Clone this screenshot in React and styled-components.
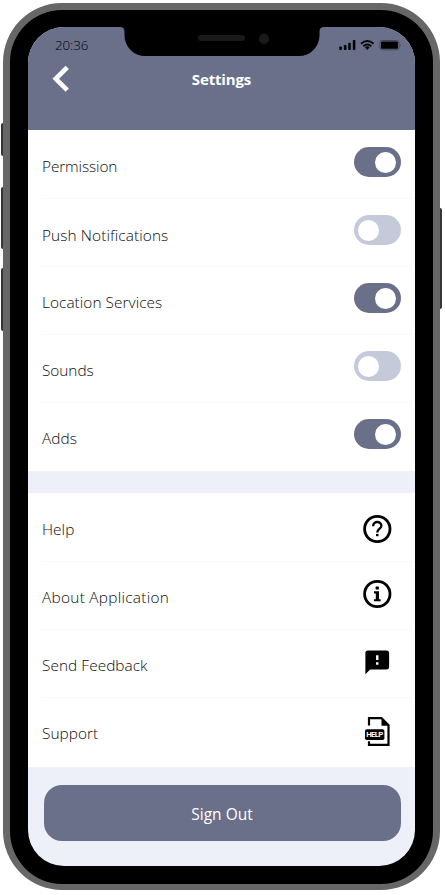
import React from "react";
import styled, { createGlobalStyle, css } from "styled-components";
import { MdFeedback } from "react-icons/md";

const slate = "#6a7089";

const GlobalStyle = createGlobalStyle`
  *, *::before, *::after { box-sizing: border-box; }
  body {
    margin: 0;
    background: #fff;
    font-family: "Open Sans", "Noto Sans", sans-serif;
    overflow: hidden;
  }
`;

const Stage = styled.main`
  width: 445px;
  height: 895px;
  padding: 3px 0 0 3px;
`;

const Device = styled.div`
  position: relative;
  width: 437px;
  height: 887px;
  padding: 17px 18px 18px;
  border: solid #676767;
  border-width: 7px 7px 6px;
  border-radius: 59px;
  background: #000;
`;

const SideButton = styled.span`
  position: absolute;
  top: ${(p) => p.$top - 10}px;
  ${(p) => (p.$right ? "right: -9px;" : "left: -9px;")}
  width: 2px;
  height: ${(p) => p.$length}px;
  background: #343737;
  border-radius: ${(p) => (p.$right ? "0 2px 2px 0" : "2px 0 0 2px")};
`;

const Screen = styled.div`
  height: 839px;
  display: flex;
  flex-direction: column;
  border-radius: 36px;
  overflow: hidden;
  background: #edf0f9;
`;

const Notch = styled.svg`
  position: absolute;
  left: 110px;
  top: 16px;
`;

const Header = styled.header`
  height: 103px;
  flex: none;
  background: ${slate};
`;

const StatusBar = styled.div`
  height: 36px;
  display: flex;
  align-items: center;
  justify-content: space-between;
  padding: 0 12px 0 27px;
`;

const Clock = styled.time`
  color: #000;
  font-size: 13.4px;
  line-height: 18px;
  font-weight: 300;
  letter-spacing: -0.1px;
`;

const NavBar = styled.div`
  display: grid;
  grid-template-columns: 25px 1fr 25px;
  padding: 0 16px;
  height: 32px;
  align-items: center;
`;

const BackButton = styled.button`
  padding: 0;
  border: 0;
  background: none;
  height: 32px;
  width: 32px;
  display: flex;
`;

const Title = styled.h1`
  margin: 0;
  color: #fff;
  text-align: center;
  font-size: 15px;
  line-height: 20px;
  font-weight: 700;
  letter-spacing: -0.15px;
`;

const Group = styled.section`
  flex: none;
  background: #fff;
  padding-top: 1px;
  padding-bottom: ${(p) => p.$extra || 0}px;
  margin-bottom: ${(p) => p.$gap || 0}px;
`;

const Row = styled.div`
  height: 68px;
  margin-left: 14px;
  padding-right: 14px;
  display: flex;
  justify-content: space-between;
  align-items: flex-start;
  border-bottom: 1px solid #f9f9f9;
  &:last-child { border-bottom-color: transparent; }
`;

const Label = styled.span`
  padding-top: ${(p) => (p.$low ? 25 : 24)}px;
  color: #0c0c0c;
  font-size: 15.4px;
  line-height: 24px;
  font-weight: 300;
  letter-spacing: ${(p) => p.$track || 0}px;
  white-space: nowrap;
`;

const Toggle = styled.button`
  width: 47px;
  height: 30px;
  margin-top: 16px;
  padding: 0 4px;
  border: 0;
  border-radius: 15px;
  display: flex;
  align-items: center;
  ${(p) =>
    p.$on
      ? css`justify-content: flex-end; background: ${slate}; padding-right: 5px;`
      : css`justify-content: flex-start; background: #c5cadb;`}
`;

const Knob = styled.span`
  width: 21px;
  height: 21px;
  border-radius: 50%;
  background: #fff;
`;

const IconSlot = styled.span`
  width: 34px;
  height: 34px;
  margin: ${(p) => p.$top}px 7px 0 0;
  display: flex;
  align-items: center;
  justify-content: center;
  color: #000;
  svg { flex: none; display: block; }
`;

const SignOut = styled.button`
  flex: none;
  height: 56px;
  margin: 18px 14.5px 0 15.5px;
  border: 0;
  border-radius: 18px;
  background: ${slate};
  color: #fff;
  font-family: inherit;
  font-size: 15.5px;
  line-height: 24px;
  padding: 3px 0 0;
`;

const StatusIcons = () => (
  <svg width="64" height="14" viewBox="0 0 64 14">
    <g fill="#050507">
      <rect x="0.3" y="8.6" width="2.6" height="3.3" rx="0.7" />
      <rect x="4.9" y="6.9" width="2.6" height="5" rx="0.7" />
      <rect x="9.2" y="4.8" width="2.6" height="7.1" rx="0.7" />
      <rect x="13.8" y="2" width="2.6" height="9.9" rx="0.7" />
      <path d="M26 9.3a3 3 0 0 1 4.6 0L28.3 12z" />
    </g>
    <g fill="none" stroke="#050507" strokeWidth="1.9">
      <path d="M22 5.7q6.3-5.2 12.6 0" />
      <path d="M24.3 8.2q4-3.2 8 0" />
    </g>
    <rect x="40.8" y="2.5" width="19.2" height="9.3" rx="2.4" fill="none" stroke="#454958" />
    <rect x="42" y="3.5" width="16.9" height="7.3" rx="1.1" fill="#000" />
    <path d="M61.3 5.5q1.5 1.6 0 3.2z" fill="#454958" />
  </svg>
);

const BackIcon = () => (
  <svg width="32" height="32" viewBox="0 0 32 32">
    <path d="M23.2 4.4 11.8 15.8 23.2 27.2" fill="none" stroke="#fff" strokeWidth="4.7" />
  </svg>
);

const QuestionIcon = () => (
  <svg width="34" height="34" viewBox="0 0 34 34">
    <circle cx="17.3" cy="17" r="12.7" fill="none" stroke="#000" strokeWidth="2.8" />
    <path
      d="M13.2 14.3v-.6a4.1 3.7 0 0 1 8.2 0c0 2.9-4.1 3.1-4.1 6.7"
      fill="none"
      stroke="#000"
      strokeWidth="2.3"
    />
    <rect x="16" y="21.9" width="2.5" height="2.3" />
  </svg>
);

const InfoIcon = () => (
  <svg width="34" height="34" viewBox="0 0 34 34">
    <circle cx="17.3" cy="17" r="12.7" fill="none" stroke="#000" strokeWidth="2.8" />
    <rect x="15.6" y="9.5" width="3.3" height="3.1" rx="0.5" />
    <path d="M14 14.2h5v8h1.6v2.1h-6.7v-2.1h1.9v-5.8h-1.8z" />
  </svg>
);

const HelpFileIcon = () => (
  <svg width="34" height="34" viewBox="0 0 34 34">
    <path d="M9 11.5V4.2h12.5l7 7v19.6h-19.5v-3.5" fill="none" stroke="#000" strokeWidth="2.2" />
    <path d="M21.5 4v7.8h7.8z" />
    <rect x="5" y="15.2" width="19.4" height="10.8" rx="1.8" />
    <text
      x="14.7"
      y="23.4"
      fill="#fff"
      fontSize="7.8"
      fontWeight="700"
      fontFamily="Roboto, sans-serif"
      textAnchor="middle"
      textLength="17"
      lengthAdjust="spacing"
    >
      HELP
    </text>
  </svg>
);

const preferences = [
  { label: "Permission", on: true, track: -0.12 },
  { label: "Push Notifications", on: false, track: 0.1, low: true },
  { label: "Location Services", on: true, track: 0.05 },
  { label: "Sounds", on: false, track: -0.05 },
  { label: "Adds", on: true, track: 0.05 },
];

const links = [
  { label: "Help", icon: <QuestionIcon />, top: 18, track: 0.05 },
  { label: "About Application", icon: <InfoIcon />, top: 15, track: 0.28 },
  { label: "Send Feedback", icon: <MdFeedback size={28.5} />, top: 15, track: 0.05 },
  { label: "Support", icon: <HelpFileIcon />, top: 16, track: 0.03 },
];

export default function App() {
  const [values, setValues] = React.useState(preferences.map((p) => p.on));
  const flip = (i) => setValues((v) => v.map((on, n) => (n === i ? !on : on)));

  return (
    <>
      <GlobalStyle />
      <Stage>
        <Device>
          <SideButton $top={123} $length={33} />
          <SideButton $top={187} $length={62} />
          <SideButton $top={268} $length={63} />
          <SideButton $top={208} $length={101} $right />
          <Screen>
            <Header>
              <StatusBar>
                <Clock>20:36</Clock>
                <StatusIcons />
              </StatusBar>
              <NavBar>
                <BackButton aria-label="Back">
                  <BackIcon />
                </BackButton>
                <Title>Settings</Title>
              </NavBar>
            </Header>
            <Group $gap={22}>
              {preferences.map((item, i) => (
                <Row key={item.label}>
                  <Label $track={item.track} $low={item.low}>{item.label}</Label>
                  <Toggle $on={values[i]} onClick={() => flip(i)} aria-label={item.label}>
                    <Knob />
                  </Toggle>
                </Row>
              ))}
            </Group>
            <Group $extra={0.5}>
              {links.map((item) => (
                <Row key={item.label}>
                  <Label $track={item.track}>{item.label}</Label>
                  <IconSlot $top={item.top}>{item.icon}</IconSlot>
                </Row>
              ))}
            </Group>
            <SignOut>Sign Out</SignOut>
          </Screen>
          <Notch width="204" height="30" viewBox="0 0 204 30">
            <path d="M0 0H204V1Q199.5 1 199.5 5.5V9.5A20.5 20.5 0 0 1 179 30H25A20.5 20.5 0 0 1 4.5 9.5V5.5Q4.5 1 0 1Z" />
            <rect x="78" y="9" width="47" height="6" rx="3" fill="#1a1a1a" />
            <circle cx="144" cy="12.7" r="5.2" fill="#1a1a1a" />
          </Notch>
        </Device>
      </Stage>
    </>
  );
}
